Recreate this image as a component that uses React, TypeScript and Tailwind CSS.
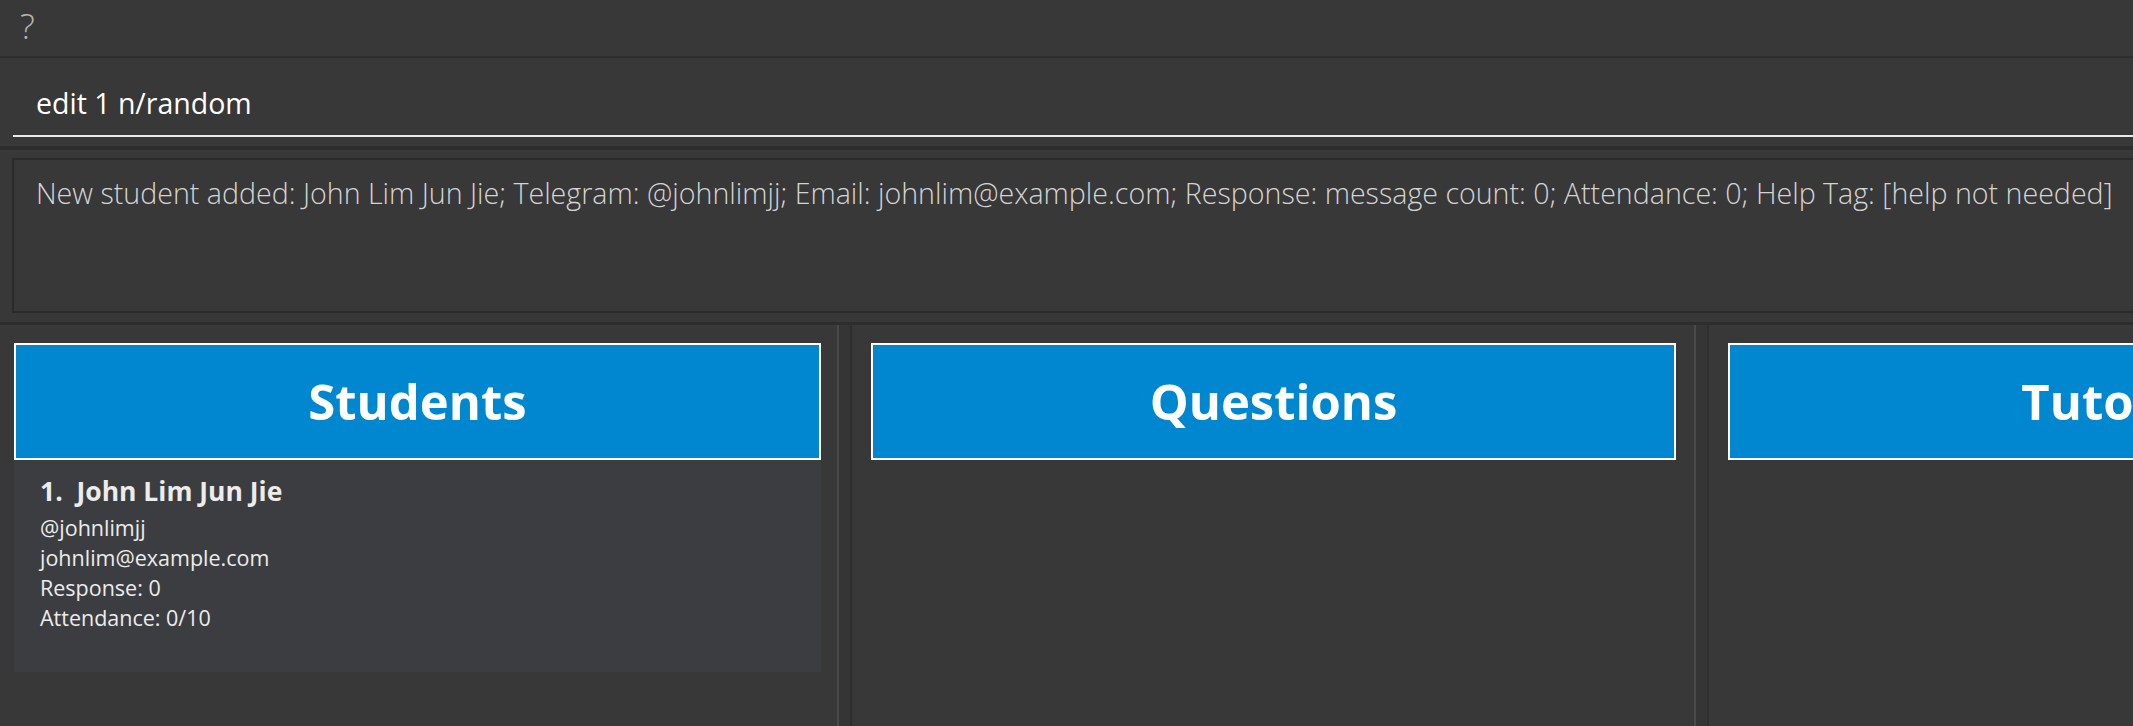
import React from "react";

const font = { fontFamily: '"Open Sans", "Noto Sans", "Liberation Sans", sans-serif' };

type PanelProps = {
  title: string;
  children?: React.ReactNode;
  className: string;
  headerClass: string;
};

function Panel({ title, children, className, headerClass }: PanelProps) {
  return (
    <div className={`flex h-full shrink-0 flex-col bg-[#383838] pt-[18px] ${className}`}>
      <div
        className={`flex h-[117px] shrink-0 items-center justify-center border-2 border-white bg-[#0087cf] ${headerClass}`}
      >
        <h2 className="whitespace-nowrap text-[49px] font-bold leading-none text-white">{title}</h2>
      </div>
      {children}
    </div>
  );
}

function Divider() {
  return (
    <div className="h-full w-[15px] shrink-0 border-l-2 border-r-2 border-l-[#4a4a4a] border-r-[#2e2e2e] bg-[#353535]" />
  );
}

function StudentCard() {
  return (
    <div className="mr-[16px] ml-[14px] h-[212px] bg-[#3c3d40] pl-[26px] pt-[13px] text-[#ececec]">
      <p className="whitespace-pre text-[26.5px] font-bold leading-[36px]">
        1.  John Lim Jun Jie
      </p>
      <div className="mt-[4px] text-[21.5px] leading-[30px]">
        <p>@johnlimjj</p>
        <p>johnlim@example.com</p>
        <p>Response: 0</p>
        <p>Attendance: 0/10</p>
      </div>
    </div>
  );
}

export default function App() {
  return (
    <div style={font} className="flex h-[726px] w-[2133px] flex-col overflow-hidden bg-[#383838]">
      <div className="flex h-[58px] shrink-0 items-start border-b-2 border-[#2d2d2d] pl-[20px] pt-[8px]">
        <span className="text-[35px] font-light leading-none text-[#b4b4b4]">?</span>
      </div>

      <div className="flex h-[88px] shrink-0 flex-col pl-[13px] pt-[20px]">
        <div className="h-[59px] border-b-2 border-[#e8e8e8] pl-[23px]">
          <p className="pt-[3px] text-[28.5px] leading-[44px] text-white">edit 1 n/random</p>
        </div>
      </div>

      <div className="h-[4px] shrink-0 bg-[#2d2d2d]" />

      <div className="h-[172px] shrink-0 pl-[12px] pt-[8px]">
        <div className="h-[155px] border-y-2 border-l-2 border-[#2b2b2b] pl-[22px] pt-[12px]">
          <p className="whitespace-nowrap text-[28.6px] font-light leading-[42px] text-[#d4d4d4]">
            New student added: John Lim Jun Jie; Telegram: @johnlimjj; Email: johnlim@example.com; Response: message count: 0; Attendance: 0; Help Tag: [help not needed]
          </p>
        </div>
      </div>

      <div className="h-[3px] shrink-0 bg-[#2d2d2d]" />

      <div className="flex min-h-0 flex-1 overflow-hidden">
        <Panel title="Students" className="w-[837px]" headerClass="ml-[14px] mr-[16px]">
          <StudentCard />
        </Panel>
        <Divider />
        <Panel title="Questions" className="w-[842px]" headerClass="ml-[19px] mr-[18px]" />
        <Divider />
        <Panel title="Tutorials" className="w-[842px]" headerClass="ml-[19px] mr-[18px]" />
      </div>
    </div>
  );
}
